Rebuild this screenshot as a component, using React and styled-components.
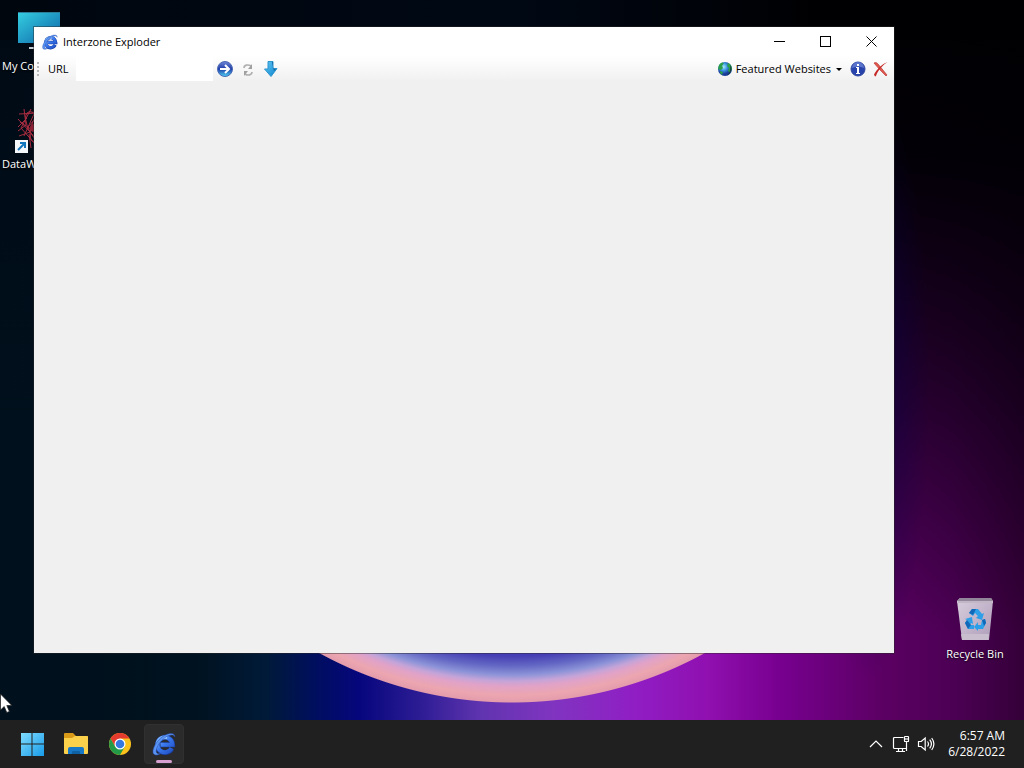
import React from "react";
import styled, { createGlobalStyle } from "styled-components";

const GlobalStyle = createGlobalStyle`
  *, *::before, *::after { box-sizing: border-box; }
  body {
    margin: 0;
    background: #000;
    font-family: "Open Sans", "Noto Sans", sans-serif;
    font-size: 12px;
    line-height: 16px;
  }
  button, input { font: inherit; color: inherit; }
  svg { display: block; flex: none; }
`;

const Screen = styled.div`
  display: flex;
  flex-direction: column;
  min-height: 100vh;
  overflow: hidden;
`;

/* The planet's lit rim shows only along the bottom edge of the wallpaper. */
const Desktop = styled.main`
  position: relative;
  flex: 1;
  display: flex;
  justify-content: space-between;
  background:
    radial-gradient(circle at 50% -318px,
      #4038ac 342px, #463eb4 354px, #6468c4 364px, #8e94d8 373px,
      #c4a4d8 379px, #e0a2c8 384px, #eca6b0 393px, #e49cac 400px, transparent 401px) bottom / 100% 100px no-repeat,
    linear-gradient(90deg, #00060e, #000814 50%, #000002 80%) top / 100% 40px no-repeat,
    radial-gradient(ellipse 60px 300px at 870px 380px, rgba(0, 0, 70, 0.6), transparent),
    linear-gradient(to bottom, #000002 0, rgba(0, 0, 4, 0.96) 22%, rgba(0, 0, 8, 0.5) 58%, transparent 88%) right / 50% 100% no-repeat,
    linear-gradient(to bottom, rgba(0, 0, 8, 0.4), transparent 60%),
    linear-gradient(90deg,
      #00101c 0, #00121f 19%, #001a38 26%, #000e60 31%, #06067c 35%, #2c1c94 41%,
      #6034b0 47%, #8034c0 54%, #901ec4 62%, #9010b0 69%, #780090 76%,
      #5c0064 86%, #4c0054 93%, #340038 100%);
`;

const IconColumn = styled.div`
  display: flex;
  flex-direction: column;
  justify-content: ${(p) => (p.$end ? "flex-end" : "flex-start")};
  gap: 32px;
  padding: ${(p) => (p.$end ? "0 12px 58px" : "8px 2px")};
`;

const Shortcut = styled.button`
  display: flex;
  flex-direction: column;
  align-items: ${(p) => (p.$start ? "flex-start" : "center")};
  gap: 2px;
  width: 74px;
  padding: 0;
  border: 0;
  background: none;
  color: #fff;
  line-height: 16px;
  text-shadow: 0 1px 2px #000;
  white-space: nowrap;
`;

const IconSlot = styled.span`
  display: flex;
  justify-content: center;
  width: 100%;
`;

const Caption = styled.span`
  font-size: 11px;
`;

const Window = styled.section`
  position: absolute;
  inset: 27px 130px 67px 34px;
  display: flex;
  flex-direction: column;
  background: #f0f0f0;
  box-shadow: 0 0 0 1px rgba(40, 40, 40, 0.45);
  color: #000;
`;

const TitleBar = styled.header`
  display: flex;
  align-items: center;
  gap: 5px;
  height: 29px;
  padding-left: 8px;
  background: #fff;
`;

const Title = styled.h1`
  flex: 1;
  margin: 0;
  font-size: 11px;
  font-weight: 400;
  line-height: 16px;
`;

const WindowControls = styled.div`
  display: flex;
  height: 100%;
`;

const ControlButton = styled.button`
  display: grid;
  place-items: center;
  width: 46px;
  padding: 0;
  border: 0;
  background: none;
`;

const Toolbar = styled.div`
  display: flex;
  align-items: center;
  height: 26px;
  padding-left: 3px;
  background: linear-gradient(#fff, #f0f0f0);
  font-size: 11px;
`;

const Grip = styled.span`
  width: 2px;
  height: 15px;
  margin-right: 9px;
  background: repeating-linear-gradient(#b8b8b8 0 2px, transparent 2px 4px);
`;

const UrlLabel = styled.label`
  width: 28px;
`;

const UrlInput = styled.input`
  width: 137px;
  height: 24px;
  padding: 0 4px;
  border: 0;
  outline: 0;
  background: #fff;
`;

const ToolButton = styled.button`
  display: flex;
  align-items: center;
  justify-content: center;
  gap: 3px;
  min-width: 23px;
  height: 22px;
  padding: 0;
  border: 0;
  background: none;
`;

const ToolbarEnd = styled.div`
  display: flex;
  align-items: center;
  margin-left: auto;
  padding-right: 2px;
`;

const MenuCaret = styled.span`
  margin: 0 4px 0 2px;
  border: 3px solid transparent;
  border-top-color: #000;
  border-bottom: 0;
`;

const Page = styled.div`
  flex: 1;
`;

const Taskbar = styled.footer`
  display: flex;
  align-items: center;
  justify-content: space-between;
  height: 48px;
  padding: 0 19px 0 12px;
  background: #202020;
  color: #fff;
`;

const TaskGroup = styled.nav`
  display: flex;
  gap: 4px;
`;

const TaskButton = styled.button`
  position: relative;
  display: grid;
  place-items: center;
  width: 40px;
  height: 40px;
  padding: 0;
  border: ${(p) => (p.$active ? "1px solid #303030" : "0")};
  border-radius: 4px;
  background: ${(p) => (p.$active ? "#2b2b2b" : "none")};
`;

const ActiveMark = styled.span`
  position: absolute;
  bottom: 0;
  left: 50%;
  width: 16px;
  height: 3px;
  margin-left: -8px;
  border-radius: 2px;
  background: #d8a0d0;
`;

const Tray = styled.div`
  display: flex;
  align-items: center;
`;

const TrayButton = styled.button`
  display: grid;
  place-items: center;
  width: 25px;
  height: 32px;
  padding: 0;
  border: 0;
  background: none;
  color: #fff;
`;

const Clock = styled.time`
  display: flex;
  flex-direction: column;
  width: 67px;
  font-size: 12px;
  line-height: 16px;
  text-align: right;
`;

const Pointer = styled.svg`
  position: absolute;
  left: 0;
  bottom: 6px;
`;

function BrowserLogo({ size, id }) {
  return (
    <svg width={size} height={size} viewBox="0 0 24 24" aria-hidden="true">
      <defs>
        <linearGradient id={id} x1="0" y1="0" x2="1" y2="1">
          <stop offset="0" stopColor="#86c0ff" />
          <stop offset="0.45" stopColor="#3a78ee" />
          <stop offset="1" stopColor="#2050c4" />
        </linearGradient>
      </defs>
      <path d="M19.800 16.400A7.600 7.600 0 1 1 20.600 12.800H8.500" fill="none" stroke="#1a3c9c" strokeWidth="5" />
      <path d="M19.600 16.200A7.500 7.500 0 1 1 20.400 12.800H8.500" fill="none" stroke={`url(#${id})`} strokeWidth="4" />
      <path d="M7 9.500C8.600 6.800 11.500 5.400 15 6" fill="none" stroke="#b4dcff" strokeWidth="1.400" />
      <path d="M22.800 5C23.200.6 17 .2 11 4.400 4.400 9 .4 16 1 20.600c.5 3.400 4.800 3 8.600.4-3.400 1.400-5.600.8-5.400-2.200C4.500 14.500 8.300 9 13 5.600 17.600 2.400 22 2 22.800 5z" fill="#5a94f4" stroke="#2448a8" strokeWidth=".5" />
    </svg>
  );
}

function ComputerIcon() {
  return (
    <svg width="48" height="48" viewBox="0 0 48 48" aria-hidden="true">
      <defs>
        <linearGradient id="monitor" x1="0" y1="0" x2="1" y2="1">
          <stop offset="0" stopColor="#35cfe0" />
          <stop offset="1" stopColor="#0b62a8" />
        </linearGradient>
      </defs>
      <path d="M3 4h42v31H3z" fill="url(#monitor)" />
      <path d="M3 4h42v1H3z" fill="#2b7d98" />
      <path d="M21 35h6v4h-6z" fill="#8a959b" />
      <path d="M14 39h20v2H14z" fill="#c4cdd2" />
    </svg>
  );
}

function WebIcon() {
  return (
    <svg width="48" height="48" viewBox="0 0 48 48" aria-hidden="true">
      <g fill="none" stroke="#a82c40" strokeWidth="1">
        <path d="M4 8l18-1M9 3l2 16-8 6M3 13l12 13L4 30M12 12l-9 9M5 16l17 11M16 3 6 22l14 16M19 8 9 30M21 12 12 22l8 10M14 28l2 14" />
        <ellipse cx="22" cy="22" rx="18" ry="8" transform="rotate(60 22 22)" />
        <ellipse cx="22" cy="22" rx="14" ry="6" transform="rotate(105 22 22)" />
      </g>
      <circle cx="19" cy="22" r="4" fill="#8c2034" />
      <rect y="34" width="13" height="13" fill="#f4f8fb" />
      <path d="m3 44 6-6M5 37h5v5" fill="none" stroke="#1277bd" strokeWidth="2" />
    </svg>
  );
}

function BinIcon() {
  return (
    <svg width="48" height="48" viewBox="0 0 48 48" aria-hidden="true">
      <defs>
        <linearGradient id="bin" x1="0" y1="0" x2="1" y2="1">
          <stop offset="0" stopColor="#d8cede" />
          <stop offset="1" stopColor="#ae9cb8" />
        </linearGradient>
      </defs>
      <path d="M6 5 9 2h31l2 3-4 39H11z" fill="url(#bin)" />
      <path d="M6 5 9 2h31l2 3-1 2H7z" fill="#92869a" />
      <path d="M6 6h36" stroke="#eee6f1" />
      <path d="m10 38 28 0-.5 6H11z" fill="#c8bece" />
      <g fill="#2c9fe8">
        <path d="m18 17 3-4h6l4 5 2-1-2 7-6-2 2-2-3-3-2 3z" />
        <path d="m31 24 3-1 1 4-3 6h-5v2l-4-4 4-5v3h3z" />
        <path d="m23 33h-6l-3-6 2-3-2-1 7-2 1 7-2-1-1 2h4z" />
      </g>
      <path d="m18 17 3-4h4l-3 6zM31 24l3-1 1 4-2 3zM17 33l-3-6 2-3 4 5z" fill="#1268b8" />
    </svg>
  );
}

const GoIcon = () => (
  <svg width="16" height="16" viewBox="0 0 16 16" aria-hidden="true">
    <defs>
      <linearGradient id="go" x1="0" y1="0" x2="0" y2="1">
        <stop offset="0" stopColor="#7187d6" />
        <stop offset=".5" stopColor="#1d3ba8" />
        <stop offset="1" stopColor="#4fd4f4" />
      </linearGradient>
    </defs>
    <circle cx="8" cy="8" r="7.500" fill="url(#go)" stroke="#4a68b4" />
    <path d="M3 8h9M8 4l4 4-4 4" fill="none" stroke="#fff" strokeWidth="2" />
  </svg>
);

const RefreshIcon = () => (
  <svg width="16" height="16" viewBox="0 0 16 16" aria-hidden="true">
    <path d="M4 7c0-3 4-4 7-2M12 11c0 3-4 4-7 2" fill="none" stroke="#b0b0b0" strokeWidth="1.600" />
    <path d="M12 3v5H8zM4 15v-5h4z" fill="#a0a0a0" />
  </svg>
);

const DownIcon = () => (
  <svg width="16" height="16" viewBox="0 0 16 16" aria-hidden="true">
    <defs>
      <linearGradient id="down" x1="0" y1="0" x2="1" y2="1">
        <stop offset="0" stopColor="#63c8f2" />
        <stop offset="1" stopColor="#0c83d0" />
      </linearGradient>
    </defs>
    <path d="M5 .5h5v7h4L8 15.500 1.500 8H5z" fill="url(#down)" stroke="#2c94cc" />
    <path d="M9 1h1v7h3l-2 2z" fill="#14629e" />
  </svg>
);

const GlobeIcon = () => (
  <svg width="16" height="16" viewBox="0 0 16 16" aria-hidden="true">
    <defs>
      <radialGradient id="globe" cx=".4" cy=".35">
        <stop offset="0" stopColor="#a8ecf8" />
        <stop offset=".5" stopColor="#3c98e4" />
        <stop offset="1" stopColor="#183c98" />
      </radialGradient>
    </defs>
    <circle cx="8" cy="8" r="7" fill="url(#globe)" />
    <path d="M2 4c2-3 4-3 5-2L5 5l1 2-2 2-3-1zM11 2c3 1 4 4 4 6l-2 4-2-2 1-3-2-2zM3 10l3 1-1 3-2-2z" fill="#2aa04a" />
    <path d="M13 4c3 4 1 9-4 11 3-2 5-5 4-11z" fill="#163a42" />
  </svg>
);

const InfoIcon = () => (
  <svg width="16" height="16" viewBox="0 0 16 16" aria-hidden="true">
    <circle cx="8" cy="8" r="7" fill="#2943ad" stroke="#3048a0" />
    <path d="M2 7a6 6 0 0 1 12 0c-4-2-8-2-12 0z" fill="#5b74cc" />
    <path d="M7 3h2v2H7zM6 6h3v6h1v1H6v-1h1V7H6z" fill="#fff" />
  </svg>
);

const StopIcon = () => (
  <svg width="16" height="16" viewBox="0 0 16 16" aria-hidden="true">
    <path d="M1 2c2-1 3 0 4 1l9 11-1 1C9 11 5 7 1 2z" fill="#e05a50" stroke="#b32826" strokeWidth=".6" />
    <path d="M14.500 1C10 4 5 9 3 15l-1 .5-1-2C4 8 9 3 14.500 1z" fill="#c52a28" />
  </svg>
);

const StartIcon = () => (
  <svg width="24" height="24" viewBox="0 0 24 24" aria-hidden="true">
    <defs>
      <linearGradient id="start" gradientUnits="userSpaceOnUse" x1="0" y1="0" x2="24" y2="24">
        <stop offset="0" stopColor="#84dfff" />
        <stop offset="1" stopColor="#189be8" />
      </linearGradient>
    </defs>
    <path d="M1 1h10.500v10.500H1zM12.500 1H24v10.500H12.500zM1 12.500h10.500V24H1zM12.500 12.500H24V24H12.500z" fill="url(#start)" />
  </svg>
);

const FolderIcon = () => (
  <svg width="26" height="24" viewBox="0 0 26 24" aria-hidden="true">
    <path d="M1 2q0-1 1-1h8l3 3h11q1 0 1 1v5H1z" fill="#d99a18" />
    <path d="M1 6h8l3-2h12q1 0 1 1v16q0 1-1 1H2q-1 0-1-1z" fill="#fbd04a" />
    <path d="M5 22v-5q0-2 2-2h12q2 0 2 2v5z" fill="#1878c8" />
    <path d="M9 22v-2q0-1 1-1h6q1 0 1 1v2z" fill="#1060a4" />
  </svg>
);

const ChromeIcon = () => (
  <svg width="24" height="24" viewBox="0 0 24 24" aria-hidden="true">
    <circle cx="12" cy="12" r="11" fill="#fbc21b" />
    <path d="M2.500 6.500A11 11 0 0 1 21.500 6.500H12L7.200 14.700z" fill="#e33b2e" />
    <path d="M2.500 6.500A11 11 0 0 0 12 23l4.700-8.200H7.200z" fill="#229a48" />
    <circle cx="12" cy="12" r="5.500" fill="#fff" />
    <circle cx="12" cy="12" r="4.300" fill="#3478e0" />
  </svg>
);

export default function App() {
  return (
    <Screen>
      <GlobalStyle />
      <Desktop>
        <IconColumn>
          <Shortcut $start aria-label="My Computer">
            <IconSlot><ComputerIcon /></IconSlot>
            <Caption>My Co</Caption>
          </Shortcut>
          <Shortcut $start>
            <IconSlot><WebIcon /></IconSlot>
            <Caption>DataW</Caption>
          </Shortcut>
        </IconColumn>
        <IconColumn $end>
          <Shortcut>
            <IconSlot><BinIcon /></IconSlot>
            <Caption>Recycle Bin</Caption>
          </Shortcut>
        </IconColumn>

        <Window aria-label="Interzone Exploder">
          <TitleBar>
            <BrowserLogo size={16} id="logo-small" />
            <Title>Interzone Exploder</Title>
            <WindowControls>
              <ControlButton aria-label="Minimize">
                <svg width="11" height="11" viewBox="0 0 11 11"><path d="M0 5.500h11" stroke="#000" /></svg>
              </ControlButton>
              <ControlButton aria-label="Maximize">
                <svg width="11" height="11" viewBox="0 0 11 11"><rect x=".5" y=".5" width="10" height="10" fill="none" stroke="#000" /></svg>
              </ControlButton>
              <ControlButton aria-label="Close">
                <svg width="11" height="11" viewBox="0 0 11 11"><path d="m.5.5 10 10m0-10-10 10" stroke="#000" /></svg>
              </ControlButton>
            </WindowControls>
          </TitleBar>
          <Toolbar role="toolbar">
            <Grip />
            <UrlLabel htmlFor="url">URL</UrlLabel>
            <UrlInput id="url" type="text" />
            <ToolButton aria-label="Go"><GoIcon /></ToolButton>
            <ToolButton aria-label="Refresh"><RefreshIcon /></ToolButton>
            <ToolButton aria-label="Download"><DownIcon /></ToolButton>
            <ToolbarEnd>
              <ToolButton aria-haspopup="menu">
                <GlobeIcon />
                Featured Websites
                <MenuCaret />
              </ToolButton>
              <ToolButton aria-label="About"><InfoIcon /></ToolButton>
              <ToolButton aria-label="Exit"><StopIcon /></ToolButton>
            </ToolbarEnd>
          </Toolbar>
          <Page />
        </Window>

        <Pointer width="12" height="21" viewBox="0 0 12 21" aria-hidden="true">
          <path d="M.5 1v16l3.700-3.500 2.600 6 2.600-1.100-2.600-5.900h5z" fill="#fff" stroke="#222" strokeWidth=".7" />
        </Pointer>
      </Desktop>

      <Taskbar>
        <TaskGroup>
          <TaskButton aria-label="Start"><StartIcon /></TaskButton>
          <TaskButton aria-label="File Explorer"><FolderIcon /></TaskButton>
          <TaskButton aria-label="Chrome"><ChromeIcon /></TaskButton>
          <TaskButton $active aria-label="Interzone Exploder">
            <BrowserLogo size={24} id="logo-large" />
            <ActiveMark />
          </TaskButton>
        </TaskGroup>
        <Tray>
          <TrayButton aria-label="Show hidden icons">
            <svg width="14" height="8" viewBox="0 0 14 8"><path d="m1 7 6-6 6 6" fill="none" stroke="#fff" strokeWidth="1.200" /></svg>
          </TrayButton>
          <TrayButton aria-label="Network">
            <svg width="18" height="18" viewBox="0 0 18 18" fill="none" stroke="#fff" strokeWidth="1.200">
              <path d="M11.500 2.500h-9q-1 0-1 1v9q0 1 1 1h12M4 16.500h9M6.500 14v2M10.500 14v2M14.500 7v9" />
              <rect x="12.500" y="1.500" width="4" height="5" rx=".6" />
              <path d="M13 4h3" />
            </svg>
          </TrayButton>
          <TrayButton aria-label="Volume">
            <svg width="18" height="16" viewBox="0 0 18 16" fill="none" stroke="#fff" strokeWidth="1.200">
              <path d="M1.500 5.500v5h2.700l4 3.500V2l-4 3.500zM10.500 5.500q2 2.500 0 5M12.700 3.700q3.400 4.300 0 8.600M14.700 2q4.400 6 0 12" />
            </svg>
          </TrayButton>
          <Clock>
            <span>6:57 AM</span>
            <span>6/28/2022</span>
          </Clock>
        </Tray>
      </Taskbar>
    </Screen>
  );
}
